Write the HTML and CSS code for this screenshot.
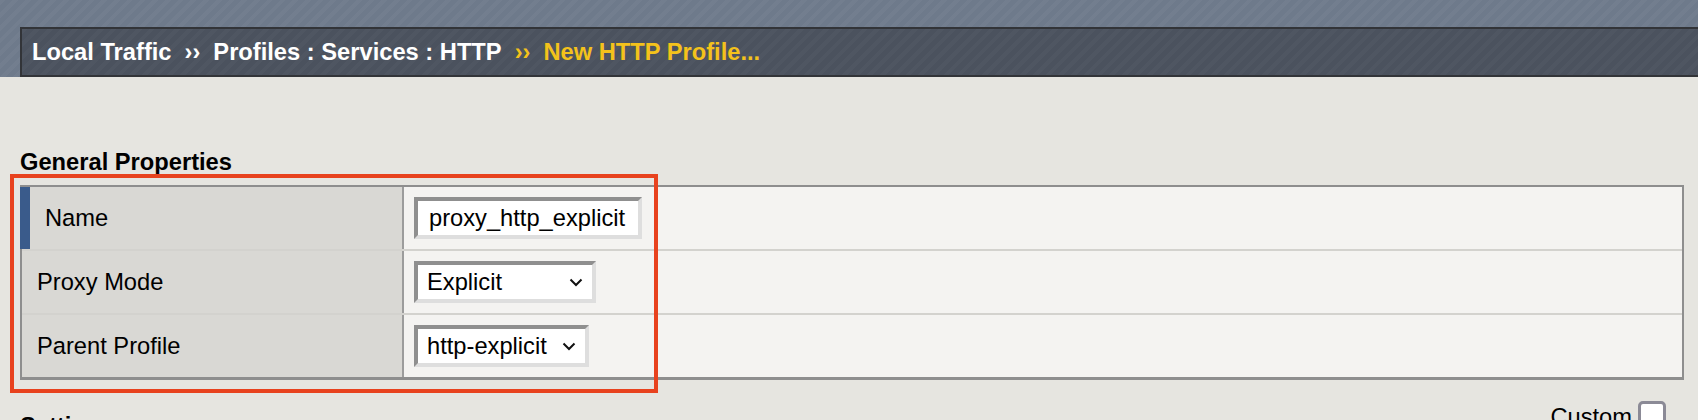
FILE: index.html
```html
<!DOCTYPE html>
<html lang="en">
<head>
<meta charset="utf-8">
<title>New HTTP Profile</title>
<link rel="stylesheet" href="styles.css">
</head>
<body>
<header class="masthead">
  <nav class="crumbbar">
    <span class="crumb">Local Traffic</span>
    <span class="sep">››</span>
    <span class="crumb">Profiles : Services : HTTP</span>
    <span class="sep current">››</span>
    <span class="crumb current">New HTTP Profile...</span>
  </nav>
</header>
<main class="content">
  <h2 class="section-title">General Properties</h2>
  <div class="props">
    <div class="label label-required">Name</div>
    <div class="value"><div class="textbox">proxy_http_explicit</div></div>
    <div class="label">Proxy Mode</div>
    <div class="value">
      <div class="select select-mode"><span>Explicit</span><svg class="chev" width="14" height="9" viewBox="0 0 14 9"><path d="M1.5 1.5 L7 7 L12.5 1.5" fill="none" stroke="#111" stroke-width="2"/></svg></div>
    </div>
    <div class="label">Parent Profile</div>
    <div class="value">
      <div class="select select-parent"><span>http-explicit</span><svg class="chev" width="14" height="9" viewBox="0 0 14 9"><path d="M1.5 1.5 L7 7 L12.5 1.5" fill="none" stroke="#111" stroke-width="2"/></svg></div>
    </div>
  </div>
  <div class="section-row">
    <h2 class="section-title settings-title">Settings</h2>
    <div class="custom"><span class="custom-text">Custom</span><span class="checkbox"></span></div>
  </div>
</main>
<div class="highlight"></div>
</body>
</html>
```

FILE: styles.css
```css
html, body {
  margin: 0;
  padding: 0;
}
body {
  position: relative;
  background: #e6e5e0;
  font-family: "Liberation Sans", Arial, Helvetica, sans-serif;
  color: #000;
  overflow: hidden;
}
.masthead {
  height: 77px;
  box-sizing: border-box;
  padding: 27px 0 0 20px;
  background-color: #6e7a8b;
  background-image: repeating-linear-gradient(135deg, rgba(255,255,255,0.03) 0 4px, rgba(0,0,0,0) 4px 9px);
}
.crumbbar {
  height: 50px;
  box-sizing: border-box;
  border: 2px solid #323438;
  border-right: 0;
  background-color: #4b525e;
  background-image: repeating-linear-gradient(135deg, rgba(255,255,255,0.025) 0 4px, rgba(0,0,0,0) 4px 9px);
  display: flex;
  align-items: center;
  padding-left: 10px;
  font-weight: bold;
  font-size: 23.7px;
  color: #fff;
  white-space: nowrap;
}
.sep {
  margin: 0 13px;
}
.current {
  color: #f4c21b;
}
.content {
  padding: 0 14px 0 20px;
}
.section-title {
  margin: 71px 0 9px 0;
  font-size: 23.7px;
  line-height: 28px;
  font-weight: bold;
}
.props {
  display: grid;
  grid-template-columns: 382px 1fr;
  grid-auto-rows: 62px;
  row-gap: 2px;
  background: #d3d2ce;
  border: 2px solid #8e8e8e;
  border-bottom-width: 3px;
}
.label {
  box-sizing: border-box;
  background: #d9d8d4;
  border-right: 2px solid #9c9c9c;
  padding-left: 15px;
  display: flex;
  align-items: center;
  font-size: 23.7px;
}
.label-required {
  margin-left: -2px;
  border-left: 10px solid #3a5b8b;
}
.value {
  background: #f4f3f1;
  display: flex;
  align-items: center;
  padding-left: 10px;
}
.textbox,
.select {
  height: 42px;
  box-sizing: border-box;
  border: 4px solid;
  border-color: #8f8f8f #dedede #dedede #8f8f8f;
  background: #fff;
  display: flex;
  align-items: center;
  font-size: 23.7px;
}
.textbox {
  width: 228px;
  padding-left: 11px;
}
.select {
  justify-content: space-between;
  padding: 0 9px;
}
.select-mode {
  width: 182px;
}
.select-parent {
  width: 175px;
}
.chev {
  display: block;
}
.section-row {
  display: flex;
  justify-content: space-between;
  align-items: flex-start;
  margin-top: 21px;
  padding-right: 18px;
}
.settings-title {
  margin: 11px 0 0 0;
}
.custom {
  display: flex;
  align-items: flex-start;
  gap: 6px;
  font-size: 23.7px;
}
.custom-text {
  margin-top: 2px;
  line-height: 28px;
}
.checkbox {
  width: 28px;
  height: 28px;
  box-sizing: border-box;
  border: 3px solid #8b8a96;
  border-radius: 5px;
  background: #fff;
}
.highlight {
  position: absolute;
  left: 10px;
  top: 174px;
  width: 648px;
  height: 219px;
  box-sizing: border-box;
  border: 4px solid #e8421e;
  pointer-events: none;
}
```
